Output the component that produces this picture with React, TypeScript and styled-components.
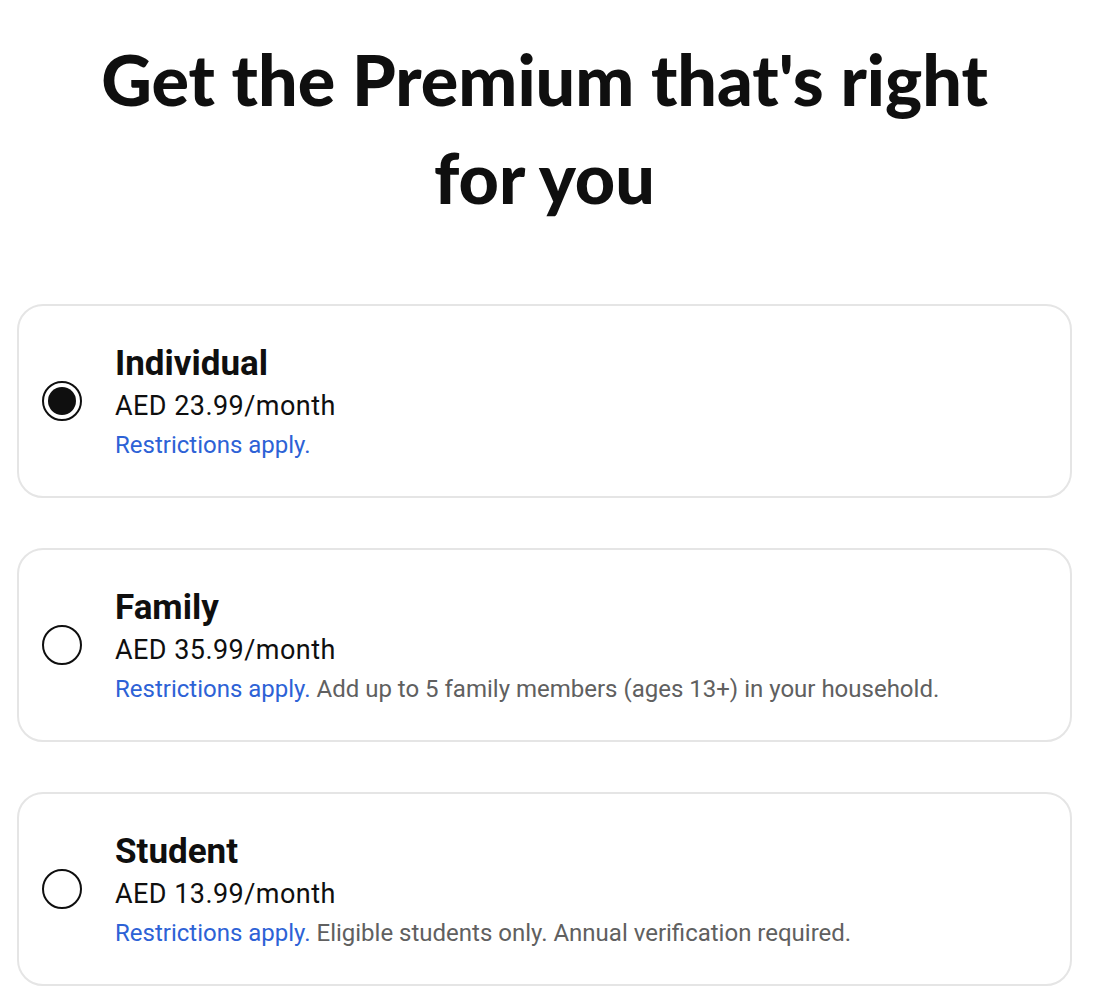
import React, { useState } from "react";
import styled, { createGlobalStyle } from "styled-components";

const Global = createGlobalStyle`
  html, body { margin: 0; padding: 0; background: #ffffff; }
  body { font-family: Roboto, "Liberation Sans", Arial, sans-serif; color: #0f0f0f; }
  * { box-sizing: border-box; }
`;

const Page = styled.main`
  width: 1055px;
  margin-left: 17px;
  padding-top: 30px;
  display: flex;
  flex-direction: column;
`;

const Heading = styled.h1`
  margin: 0 0 78px;
  text-align: center;
  font-family: Lato, "Open Sans", sans-serif;
  font-weight: 900;
  font-size: 70px;
  line-height: 98px;
  letter-spacing: 0;
  color: #0f0f0f;
  padding: 0 60px;
`;

const PlanList = styled.div`
  display: flex;
  flex-direction: column;
  gap: 50px;
`;

const Card = styled.label`
  display: flex;
  align-items: center;
  height: 194px;
  padding: 0 24px 0 23px;
  border: 2px solid #e5e5e5;
  border-radius: 26px;
  background: #fff;
  cursor: pointer;
`;

const Radio = styled.span<{ $checked: boolean }>`
  flex: none;
  width: 40px;
  height: 40px;
  border-radius: 50%;
  border: 2px solid #0f0f0f;
  display: flex;
  align-items: center;
  justify-content: center;
  margin-right: 33px;
  &::after {
    content: "";
    width: 28px;
    height: 28px;
    border-radius: 50%;
    background: #0f0f0f;
    display: ${(p) => (p.$checked ? "block" : "none")};
  }
`;

const Info = styled.div`
  display: flex;
  flex-direction: column;
`;

const PlanName = styled.div`
  margin-top: 2px;
  font-size: 35px;
  line-height: 42px;
  font-weight: 700;
  color: #0f0f0f;
`;

const Price = styled.div`
  margin-top: 3px;
  font-size: 27px;
  line-height: 36px;
  letter-spacing: 0.45px;
  font-weight: 400;
  color: #0f0f0f;
`;

const Note = styled.div`
  margin-top: 5px;
  font-size: 24px;
  line-height: 32px;
  color: #606060;
`;

const Link = styled.a`
  color: #2d62d6;
  text-decoration: none;
`;

const plans = [
  { name: "Individual", price: "AED 23.99/month", note: "" },
  {
    name: "Family",
    price: "AED 35.99/month",
    note: "Add up to 5 family members (ages 13+) in your household.",
  },
  {
    name: "Student",
    price: "AED 13.99/month",
    note: "Eligible students only. Annual verification required.",
  },
];

export default function App() {
  const [selected, setSelected] = useState(0);
  return (
    <>
      <Global />
      <Page>
        <Heading>Get the Premium that's right for you</Heading>
        <PlanList>
          {plans.map((p, i) => (
            <Card key={p.name} onClick={() => setSelected(i)}>
              <Radio $checked={selected === i} />
              <Info>
                <PlanName>{p.name}</PlanName>
                <Price>{p.price}</Price>
                <Note>
                  <Link href="#">Restrictions apply.</Link>
                  {p.note ? ` ${p.note}` : ""}
                </Note>
              </Info>
            </Card>
          ))}
        </PlanList>
      </Page>
    </>
  );
}
